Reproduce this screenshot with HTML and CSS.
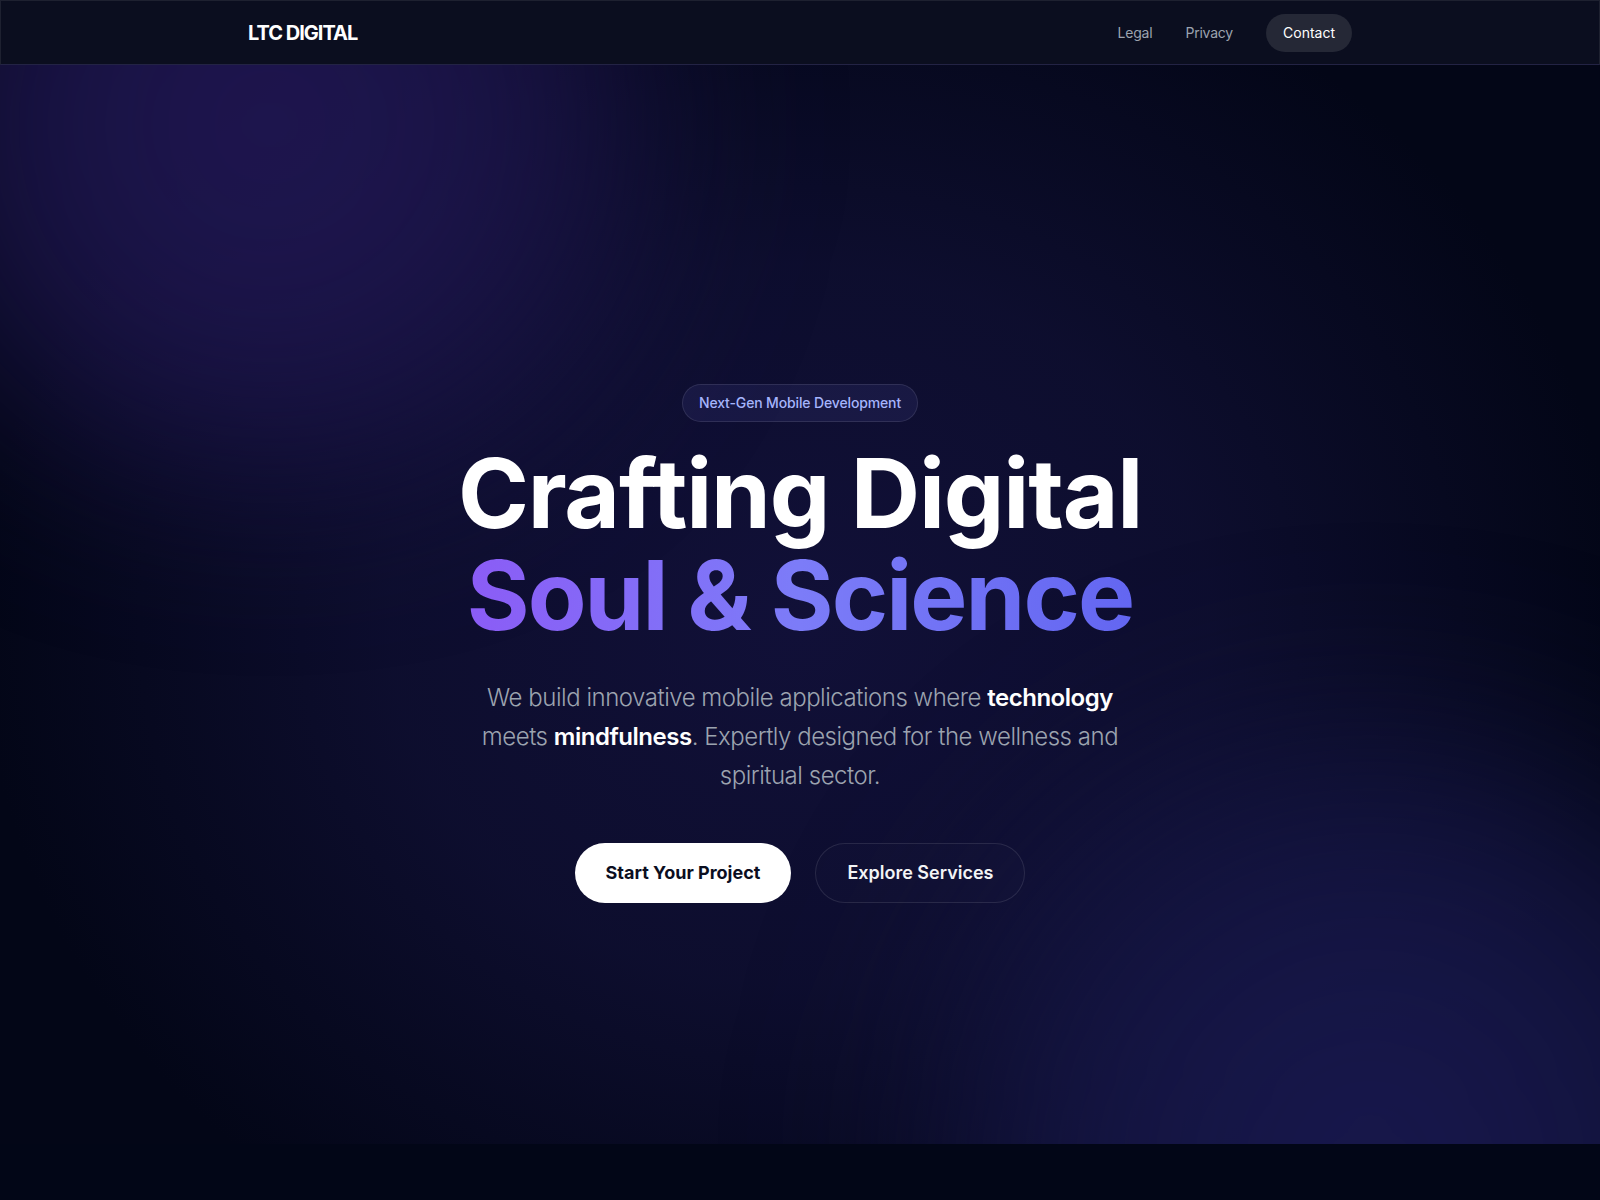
FILE: index.html
```html
<!DOCTYPE html>
<html lang="en">
<head>
<meta charset="utf-8">
<title>LTC Digital</title>
<link rel="stylesheet" href="styles.css">
</head>
<body>
<header class="nav">
  <div class="nav-inner">
    <a class="logo" href="#">LTC DIGITAL</a>
    <nav class="links">
      <a href="#" class="link">Legal</a>
      <a href="#" class="link">Privacy</a>
      <a href="#" class="contact">Contact</a>
    </nav>
  </div>
</header>
<main class="hero">
  <div class="blob blob-tl"></div>
  <div class="blob blob-br"></div>
  <div class="hero-content">
    <span class="badge">Next-Gen Mobile Development</span>
    <h1 class="title">Crafting Digital<br><span class="grad">Soul &amp; Science</span></h1>
    <p class="lead">We build innovative mobile applications where <strong>technology</strong> meets <strong>mindfulness</strong>. Expertly designed for the wellness and spiritual sector.</p>
    <div class="actions">
      <a href="#" class="btn btn-primary">Start Your Project</a>
      <a href="#" class="btn btn-ghost">Explore Services</a>
    </div>
  </div>
</main>
</body>
</html>
```
FILE: styles.css
```css
* { box-sizing: border-box; }
html, body { margin: 0; padding: 0; }
body {
  background: #020617;
  font-family: Inter, "Noto Sans", "Liberation Sans", sans-serif;
  color: #fff;
  min-height: 1200px;
}
a { text-decoration: none; color: inherit; }

.nav {
  height: 65px;
  background: #0b0e1f;
  border: 1px solid rgba(255,255,255,0.08);
  border-bottom-color: rgba(120,110,200,0.22);
}
.nav-inner {
  max-width: 1152px;
  margin: 0 auto;
  padding: 0 24px;
  height: 100%;
  display: flex;
  align-items: center;
  justify-content: space-between;
}
.logo {
  font-size: 20px;
  font-weight: 700;
  letter-spacing: -0.05em;
  color: #fff;
}
.links {
  display: flex;
  align-items: center;
  gap: 33px;
}
.link {
  font-size: 14px;
  letter-spacing: -0.015em;
  color: #9ca3af;
}
.contact {
  font-size: 14px;
  color: #fff;
  background: #252836;
  border-radius: 999px;
  padding: 10px 17px;
  line-height: 18px;
}

.hero {
  position: relative;
  overflow: hidden;
  height: 1079px;
  background:
    radial-gradient(ellipse 820px 720px at 800px 560px, rgba(17,16,56,1) 0%, rgba(15,15,50,0.85) 50%, rgba(3,6,23,0) 100%),
    #030617;
  display: flex;
  justify-content: center;
}
.blob {
  position: absolute;
  border-radius: 50%;
  filter: blur(80px);
  pointer-events: none;
}
.blob-tl {
  width: 980px;
  height: 760px;
  left: -220px;
  top: -320px;
  background: radial-gradient(circle, rgba(34,24,86,0.95) 0%, rgba(30,22,78,0.75) 45%, rgba(28,22,76,0) 70%);
}
.blob-br {
  width: 1100px;
  height: 950px;
  left: 820px;
  top: 620px;
  background: radial-gradient(circle, rgba(25,25,80,1) 0%, rgba(23,23,72,0.75) 45%, rgba(22,22,70,0) 70%);
}

.hero-content {
  position: relative;
  z-index: 1;
  display: flex;
  flex-direction: column;
  align-items: center;
  padding-top: 319px;
  text-align: center;
}
.badge {
  display: inline-block;
  font-size: 14px;
  font-weight: 500;
  line-height: 20px;
  letter-spacing: -0.01em;
  color: #a5b4fc;
  background: rgba(70,72,150,0.18);
  border: 1px solid rgba(255,255,255,0.1);
  border-radius: 999px;
  padding: 8px 16px;
}
.title {
  margin: 20px 0 0;
  font-size: 96px;
  font-weight: 700;
  line-height: 102px;
  letter-spacing: -0.012em;
  color: #fff;
}
.grad {
  background: linear-gradient(90deg, #8b5cf6 0%, #7c7cf8 50%, #6366f1 100%);
  -webkit-background-clip: text;
  background-clip: text;
  color: transparent;
  letter-spacing: -0.02em;
}
.lead {
  margin: 32px 0 0;
  max-width: 672px;
  font-size: 24px;
  font-weight: 300;
  line-height: 39px;
  letter-spacing: -0.02em;
  color: #9ca3af;
}
.lead strong {
  color: #fff;
  font-weight: 600;
}
.actions {
  margin-top: 48px;
  display: flex;
  gap: 24px;
}
.btn {
  display: inline-block;
  font-size: 18px;
  font-weight: 600;
  line-height: 28px;
  padding: 16px 32px;
  border-radius: 999px;
}
.btn-primary {
  background: #fff;
  color: #0b0e1f;
  font-weight: 700;
  padding: 16px 31px;
}
.btn-ghost {
  color: #f3f4f6;
  border: 1px solid rgba(255,255,255,0.1);
  background: rgba(255,255,255,0.01);
  padding: 15px 31px;
}
```
